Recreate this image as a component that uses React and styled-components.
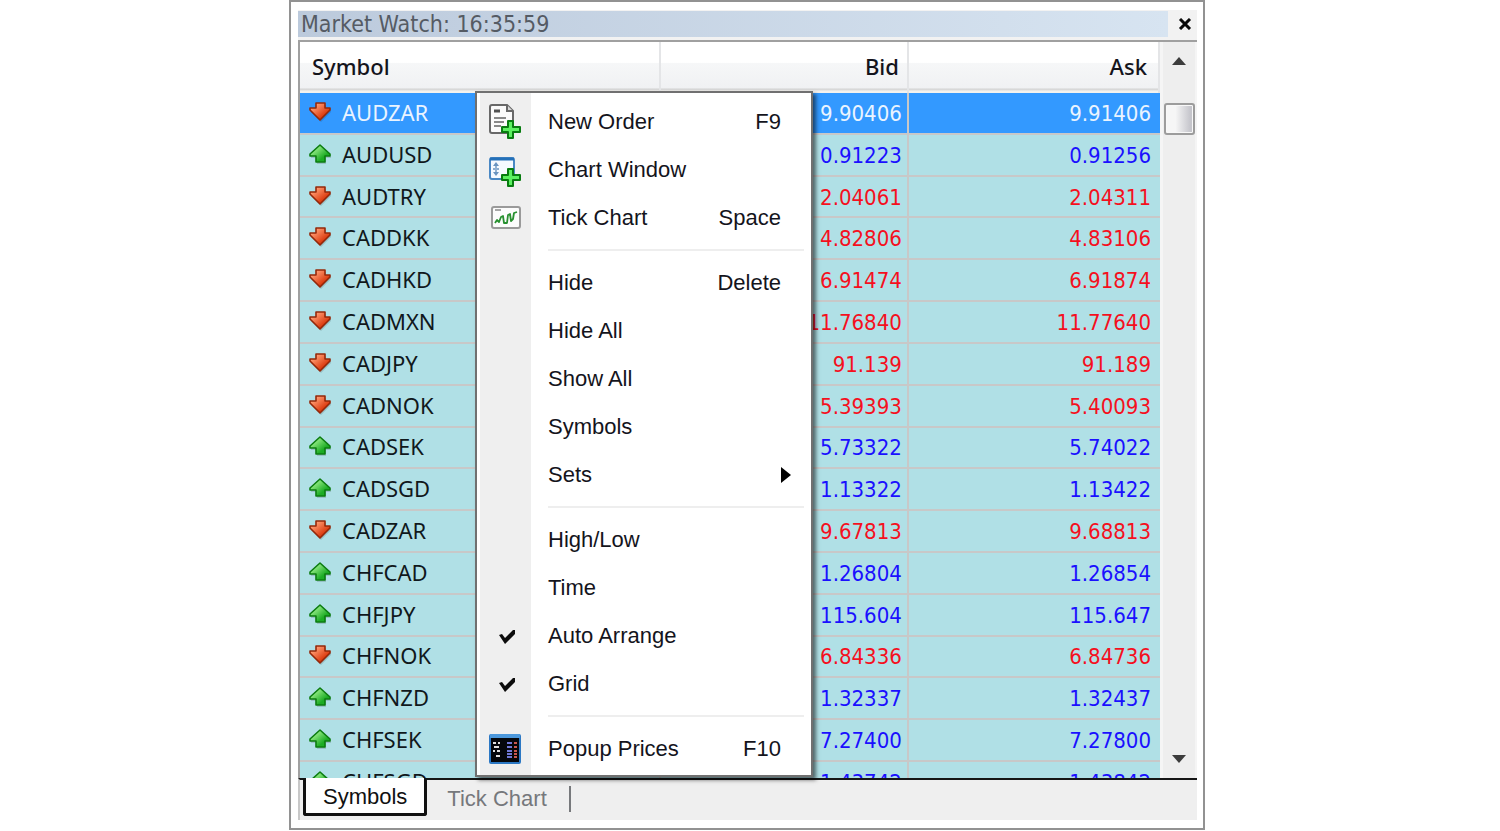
import { useState } from "react";
import styled, { createGlobalStyle, css } from "styled-components";

const GlobalStyle = createGlobalStyle`
    * {
        box-sizing: border-box;
    }
    body {
        margin: 0;
        background-color: #ffffff;
        font-family: "Liberation Sans", Arial, sans-serif;
        font-size: 22px;
    }
    button {
        font: inherit;
        color: inherit;
        border: 0;
        padding: 0;
        background: none;
        cursor: pointer;
    }
`;

const quotes = [
    { symbol: "AUDZAR", bid: "9.90406", ask: "9.91406", up: false },
    { symbol: "AUDUSD", bid: "0.91223", ask: "0.91256", up: true },
    { symbol: "AUDTRY", bid: "2.04061", ask: "2.04311", up: false },
    { symbol: "CADDKK", bid: "4.82806", ask: "4.83106", up: false },
    { symbol: "CADHKD", bid: "6.91474", ask: "6.91874", up: false },
    { symbol: "CADMXN", bid: "11.76840", ask: "11.77640", up: false },
    { symbol: "CADJPY", bid: "91.139", ask: "91.189", up: false },
    { symbol: "CADNOK", bid: "5.39393", ask: "5.40093", up: false },
    { symbol: "CADSEK", bid: "5.73322", ask: "5.74022", up: true },
    { symbol: "CADSGD", bid: "1.13322", ask: "1.13422", up: true },
    { symbol: "CADZAR", bid: "9.67813", ask: "9.68813", up: false },
    { symbol: "CHFCAD", bid: "1.26804", ask: "1.26854", up: true },
    { symbol: "CHFJPY", bid: "115.604", ask: "115.647", up: true },
    { symbol: "CHFNOK", bid: "6.84336", ask: "6.84736", up: false },
    { symbol: "CHFNZD", bid: "1.32337", ask: "1.32437", up: true },
    { symbol: "CHFSEK", bid: "7.27400", ask: "7.27800", up: true },
    { symbol: "CHFSGD", bid: "1.43742", ask: "1.43842", up: true },
];

// --- WINDOW ---

const Page = styled.div`
    min-height: 100vh;
    display: flex;
    justify-content: center;
    padding: 0 6px 1px 0;
`;

const Panel = styled.section`
    position: relative;
    width: 100%;
    max-width: 916px;
    height: calc(100vh - 1px);
    display: flex;
    flex-direction: column;
    border: 2px solid #929292;
    padding: 8px 6px 8px 7px;
`;

const TitleBar = styled.header`
    display: flex;
    height: 30px;
    padding: 1px 0 3px;
    background-color: #f2f2f2;
    h1 {
        flex: 1;
        margin: 0;
        padding-left: 3px;
        font: 400 23px/26px "DejaVu Sans Condensed", "DejaVu Sans", sans-serif;
        color: #555b64;
        background: linear-gradient(90deg, #bccadc, #d7e4f1);
    }
`;

const CloseButton = styled.button`
    width: 29px;
    display: flex;
    align-items: center;
    justify-content: center;
    padding-left: 4px;
`;

const ListArea = styled.div`
    flex: 1;
    min-height: 0;
    display: flex;
    overflow: hidden;
    border-top: 2px solid #a0a0a0;
    border-left: 2px solid #a0a0a0;
    background-color: #f5f5f5;
`;

// --- QUOTES ---

const TableBox = styled.div`
    flex: 1;
    overflow: hidden;
`;

const QuoteTable = styled.table`
    width: 100%;
    height: 762px;
    border-collapse: separate;
    border-spacing: 0;
    table-layout: fixed;
    th {
        height: 51px;
        padding: 0 11px 3px 12px;
        text-align: right;
        font: 500 22px/30px "Noto Sans", sans-serif;
        color: #14141c;
        background: linear-gradient(#ffffff 40%, #f6f7f8 42%, #f0f1f3 90%, #d8d8d8 92%, #d8d8d8 94%, #f4f2ee 96%);
        border-right: 2px solid #e4e5e7;
    }
    th:first-child {
        width: 42%;
        text-align: left;
    }
    th:nth-child(2) {
        padding-right: 8px;
    }
    th:last-child {
        width: 29.2%;
    }
`;

const QuoteRow = styled.tr`
    color: ${props => props.$up ? '#1a10ff' : '#f5101e'};
    background-color: #b0e0e6;
    ${props => props.$selected && css`
        color: #eaf4ff;
        background-color: #3399ff;
    `}
    td {
        padding: 2px 9px 0 0;
        text-align: right;
        font: 400 22px/26px "DejaVu Sans Condensed", "DejaVu Sans", sans-serif;
        border-bottom: 2px solid #c8c8c8;
    }
    td:not(:last-child) {
        padding-right: 5px;
        border-right: 2px solid #c8c8c8;
    }
    td:first-child {
        padding-top: 0;
        padding-bottom: 2px;
    }
`;

const SymbolCell = styled.div`
    display: flex;
    align-items: center;
    gap: 10px;
    padding-left: 8px;
    font-family: "Noto Sans", sans-serif;
    color: ${props => props.$selected ? '#eaf4ff' : '#10181c'};
`;

// --- SCROLLBAR ---

const ScrollBar = styled.div`
    width: 32px;
    margin: 0 2px 0 3px;
    display: flex;
    flex-direction: column;
    align-items: center;
    background-color: #eeeeee;
    button {
        height: 38px;
        width: 100%;
        display: flex;
        align-items: center;
        justify-content: center;
    }
`;

const Thumb = styled.div`
    width: 31px;
    height: 32px;
    margin: 23px 0 auto;
    border: 2px solid #9c9c9c;
    border-radius: 3px;
    background: linear-gradient(90deg, #f6f6f6 35%, #c6c6cc 90%);
    box-shadow: inset 0 0 0 1px #f8f8f8;
`;

// --- TABS ---

const Tabs = styled.nav`
    display: flex;
    align-items: flex-start;
    height: 42px;
    padding-left: 3px;
    border-left: 2px solid #c8c8c8;
    border-top: 2px solid #161616;
    background-color: #efefef;
`;

const Tab = styled.button`
    height: 38px;
    padding: 0 20px;
    color: #76787c;
    ${props => props.$active && css`
        margin-top: -2px;
        padding: 2px 17px 0;
        color: #111111;
        background-color: #ffffff;
        border: 3px solid #111111;
        border-top: 0;
        border-radius: 0 0 3px 3px;
    `}
`;

const TabDivider = styled.span`
    width: 2px;
    height: 26px;
    margin: 6px 0 0 2px;
    background-color: #77797c;
`;

// --- CONTEXT MENU ---

const Menu = styled.div`
    position: absolute;
    top: 89px;
    left: 184px;
    width: 338px;
    padding: 5px 0 2px;
    border: 2px solid #707070;
    background: linear-gradient(90deg, #ffffff 3px, #efefef 3px, #efefef 54px, #ffffff 54px);
    box-shadow: 3px 3px 4px rgba(0, 0, 0, 0.55);
`;

const MenuItem = styled.button`
    width: 100%;
    height: 48px;
    display: grid;
    grid-template-columns: 71px 1fr auto;
    align-items: center;
    padding-right: 30px;
    text-align: left;
    color: #14141c;
    &:hover {
        background-color: rgba(51, 153, 255, 0.15);
    }
`;

const IconSlot = styled.span`
    display: flex;
    height: 38px;
    padding-left: 10px;
    align-items: center;
`;

const SubmenuArrow = styled.svg`
    margin-right: -12px;
`;

const Separator = styled.hr`
    height: 2px;
    margin: 7px 7px 8px 71px;
    border: 0;
    background-color: #eeeeee;
`;

// --- ICONS ---

const arrowPath = {
    up: "M12 3 L22 12 V14 H17 V20 H8 V14 H2 V12 Z",
    down: "M8 3 H17 V8 H22 V10 L12 20 L2 10 V8 H8 Z",
};

function Arrow({ up }) {
    const dir = up ? "up" : "down";
    return (
        <svg width="24" height="24" viewBox="0 0 24 24">
            <defs>
                <linearGradient id={`arrow-${dir}`} x1="0" y1="0" x2="1" y2="1">
                    <stop offset="0.2" stopColor={up ? "#9cf08c" : "#ff9a70"} />
                    <stop offset="0.7" stopColor={up ? "#1cac24" : "#dc3c10"} />
                </linearGradient>
            </defs>
            <path d={arrowPath[dir]} transform="translate(1 2)" fill="#000000" opacity="0.14" />
            <path
                d={arrowPath[dir]}
                fill={`url(#arrow-${dir})`}
                stroke={up ? "#0c7c10" : "#94280a"}
                strokeWidth="1.6"
                strokeLinejoin="round"
            />
        </svg>
    );
}

const Plus = () => (
    <path
        d="M20 18 H25 V24 H32 V29 H25 V35 H20 V29 H14 V24 H20 Z"
        transform="translate(1 0)"
        fill="#5cf060"
        stroke="#087c10"
        strokeWidth="2"
        strokeLinejoin="round"
    />
);

const OrderIcon = () => (
    <svg width="36" height="38" viewBox="0 0 36 38">
        <path d="M5 2 H20 L26 8 V30 H5 Q3 30 3 28 V4 Q3 2 5 2 Z" fill="#fafafa" stroke="#686868" strokeWidth="2" />
        <path d="M20 2 V8 H26" fill="#d8d8d8" stroke="#686868" strokeWidth="2" />
        <path d="M7 8 H13" stroke="#505050" strokeWidth="3" />
        <path d="M7 15 H19 M7 19 H17 M7 23 H14" stroke="#888888" strokeWidth="2" />
        <Plus />
    </svg>
);

const ChartIcon = () => (
    <svg width="36" height="38" viewBox="0 0 36 38">
        <rect x="3" y="7" width="24" height="21" rx="2" fill="#f6faff" stroke="#4a88c4" strokeWidth="2" />
        <path d="M3 8 H27" stroke="#2470b8" strokeWidth="3" />
        <path d="M9 11 L12 15 H6 Z M9 25 L12 21 H6 Z" fill="#6a94c0" />
        <path d="M9 13 V23 M6 18 H8 M10 18 H12" stroke="#6a94c0" strokeWidth="1.4" />
        <Plus />
    </svg>
);

const TickIcon = () => (
    <svg width="36" height="38" viewBox="0 0 36 38">
        <rect x="5" y="8" width="28" height="21" rx="2" fill="#fcfcfc" stroke="#9a9a9a" strokeWidth="2" />
        <path d="M8 11 H14" stroke="#909090" strokeWidth="1.6" />
        <path
            d="M8 24 L10 21 L12 23 L14 18 L16 17 L17 24 L20 24 L21 16 L23 15 L24 22 L26 20 L27 14 L30 13"
            fill="none"
            stroke="#289030"
            strokeWidth="1.8"
            strokeLinejoin="round"
        />
    </svg>
);

const CheckIcon = () => (
    <svg width="36" height="38" viewBox="0 0 36 38">
        <path d="M12 18 L15 17 L18 21 L26 13 L28 13 V17 L18 27 Z" fill="#0c0c0c" />
    </svg>
);

const PricesIcon = () => (
    <svg width="36" height="38" viewBox="0 0 36 38">
        <rect x="3" y="5" width="30" height="28" rx="1" fill="#05070c" stroke="#2c78c4" strokeWidth="2" />
        <path d="M3 6 H33" stroke="#4c98dc" strokeWidth="4" />
        <path d="M6 13 H9 M11 13 H13 M7 17 H12 M6 21 H8 M10 21 H13 M9 26 H13" stroke="#e0e0e0" strokeWidth="2" />
        <path d="M20 13 H25 M20 17 H25 M20 21 H25 M20 24 H25 M20 27 H25" stroke="#7078d8" strokeWidth="2" />
        <path d="M27 13 H30 M27 17 H30 M27 21 H30 M27 24 H30 M27 27 H30" stroke="#c85850" strokeWidth="2" />
    </svg>
);

const menuGroups = [
    [
        { label: "New Order", shortcut: "F9", icon: <OrderIcon /> },
        { label: "Chart Window", icon: <ChartIcon /> },
        { label: "Tick Chart", shortcut: "Space", icon: <TickIcon /> },
    ],
    [
        { label: "Hide", shortcut: "Delete" },
        { label: "Hide All" },
        { label: "Show All" },
        { label: "Symbols" },
        { label: "Sets", submenu: true },
    ],
    [
        { label: "High/Low" },
        { label: "Time" },
        { label: "Auto Arrange", icon: <CheckIcon /> },
        { label: "Grid", icon: <CheckIcon /> },
    ],
    [
        { label: "Popup Prices", shortcut: "F10", icon: <PricesIcon /> },
    ],
];

function ContextMenu() {
    return (
        <Menu role="menu">
            {menuGroups.map((group, index) => (
                <div key={index}>
                    {index > 0 && <Separator />}
                    {group.map((item) => (
                        <MenuItem key={item.label} type="button" role="menuitem">
                            <IconSlot>{item.icon}</IconSlot>
                            <span>{item.label}</span>
                            {item.shortcut && <span>{item.shortcut}</span>}
                            {item.submenu && (
                                <SubmenuArrow width="10" height="16" viewBox="0 0 10 16">
                                    <path d="M0 0 L10 8 L0 16 Z" fill="#000000" />
                                </SubmenuArrow>
                            )}
                        </MenuItem>
                    ))}
                </div>
            ))}
        </Menu>
    );
}

function App() {
    const [selected, setSelected] = useState("AUDZAR");
    const [tab, setTab] = useState("Symbols");

    return (
        <Page>
            <GlobalStyle />
            <Panel>
                <TitleBar>
                    <h1>Market Watch: 16:35:59</h1>
                    <CloseButton type="button" aria-label="Close">
                        <svg width="14" height="12" viewBox="0 0 14 12">
                            <path d="M2 1 L12 11 M12 1 L2 11" stroke="#0a0a0a" strokeWidth="3" />
                        </svg>
                    </CloseButton>
                </TitleBar>
                <ListArea>
                    <TableBox>
                        <QuoteTable>
                            <thead>
                                <tr>
                                    <th>Symbol</th>
                                    <th>Bid</th>
                                    <th>Ask</th>
                                </tr>
                            </thead>
                            <tbody>
                                {quotes.map((quote) => (
                                    <QuoteRow
                                        key={quote.symbol}
                                        $up={quote.up}
                                        $selected={quote.symbol === selected}
                                        onClick={() => setSelected(quote.symbol)}
                                    >
                                        <td>
                                            <SymbolCell $selected={quote.symbol === selected}>
                                                <Arrow up={quote.up} />
                                                {quote.symbol}
                                            </SymbolCell>
                                        </td>
                                        <td>{quote.bid}</td>
                                        <td>{quote.ask}</td>
                                    </QuoteRow>
                                ))}
                            </tbody>
                        </QuoteTable>
                    </TableBox>
                    <ScrollBar>
                        <button type="button" aria-label="Scroll up">
                            <svg width="14" height="8" viewBox="0 0 14 8">
                                <path d="M0 8 L7 0 L14 8 Z" fill="#3c3c3c" />
                            </svg>
                        </button>
                        <Thumb />
                        <button type="button" aria-label="Scroll down">
                            <svg width="14" height="8" viewBox="0 0 14 8">
                                <path d="M0 0 L7 8 L14 0 Z" fill="#3c3c3c" />
                            </svg>
                        </button>
                    </ScrollBar>
                </ListArea>
                <Tabs>
                    <Tab type="button" $active={tab === "Symbols"} onClick={() => setTab("Symbols")}>
                        Symbols
                    </Tab>
                    <Tab type="button" $active={tab === "Tick Chart"} onClick={() => setTab("Tick Chart")}>
                        Tick Chart
                    </Tab>
                    <TabDivider />
                </Tabs>
                <ContextMenu />
            </Panel>
        </Page>
    );
}

export default App;
